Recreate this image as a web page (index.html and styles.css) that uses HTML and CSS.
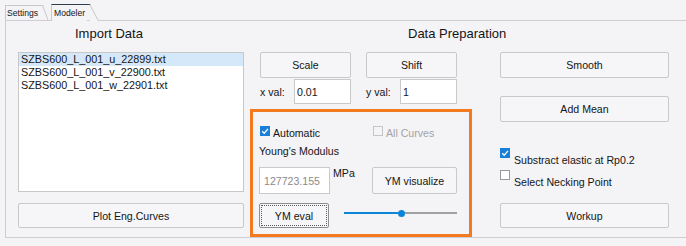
FILE: index.html
```html
<!DOCTYPE html>
<html>
<head>
<meta charset="utf-8">
<link rel="stylesheet" href="styles.css">
</head>
<body>
<div class="tabs">
  <div class="tab tab-settings">Settings</div>
  <div class="tab tab-modeler">Modeler</div>
</div>
<div class="panel">
  <div class="heads">
    <div class="h-import">Import Data</div>
    <div class="h-prep">Data Preparation</div>
  </div>
  <div class="cols">
    <div class="col-left">
      <div class="list">
        <div class="item sel">SZBS600_L_001_u_22899.txt</div>
        <div class="item">SZBS600_L_001_v_22900.txt</div>
        <div class="item">SZBS600_L_001_w_22901.txt</div>
      </div>
      <button class="btn btn-plot">Plot Eng.Curves</button>
    </div>
    <div class="col-mid">
      <div class="prep-top">
        <div class="btn-row">
          <button class="btn btn-sm">Scale</button>
          <button class="btn btn-sm">Shift</button>
        </div>
        <div class="in-row">
          <span class="lbl">x val:</span>
          <span class="field field-sm">0.01</span>
          <span class="lbl lbl-y">y val:</span>
          <span class="field field-sm">1</span>
        </div>
      </div>
      <div class="ym">
        <div class="ym-row1">
          <div class="chk-group">
            <span class="box checked"><svg viewBox="0 0 10 10" width="10" height="10"><polyline points="2.2,5.2 4.2,7.2 8,2.8" fill="none" stroke="#fff" stroke-width="1.3"/></svg></span>
            <span class="chk-text">Automatic</span>
          </div>
          <div class="chk-group">
            <span class="box disabled"></span>
            <span class="chk-text dim">All Curves</span>
          </div>
        </div>
        <div class="ym-label">Young's Modulus</div>
        <div class="ym-row3">
          <div class="ym-val">
            <span class="field field-ym">127723.155</span>
            <span class="unit">MPa</span>
          </div>
          <button class="btn btn-vis">YM visualize</button>
        </div>
        <div class="ym-row4">
          <button class="btn btn-eval">YM eval</button>
          <div class="slider">
            <span class="track-l"></span>
            <span class="thumb"></span>
            <span class="track-r"></span>
          </div>
        </div>
      </div>
    </div>
    <div class="col-right">
      <button class="btn btn-r">Smooth</button>
      <button class="btn btn-r btn-mean">Add Mean</button>
      <div class="opt opt-a">
        <span class="box checked"><svg viewBox="0 0 10 10" width="10" height="10"><polyline points="2.2,5.2 4.2,7.2 8,2.8" fill="none" stroke="#fff" stroke-width="1.3"/></svg></span>
        <span class="opt-text">Substract elastic at Rp0.2</span>
      </div>
      <div class="opt opt-b">
        <span class="box"></span>
        <span class="opt-text">Select Necking Point</span>
      </div>
      <button class="btn btn-r btn-work">Workup</button>
    </div>
  </div>
</div>
</body>
</html>
```
FILE: styles.css
```css
* { box-sizing: border-box; }
html, body { margin: 0; padding: 0; }
body {
  width: 686px;
  height: 246px;
  overflow: hidden;
  background: #f4f3f6;
  font-family: "Liberation Sans", Arial, sans-serif;
  font-size: 10.6px;
  color: #151515;
}

/* tabs */
.tabs {
  position: relative;
  z-index: 1;
  display: flex;
  align-items: flex-end;
  height: 20px;
  padding-left: 5px;
}
.tab {
  position: relative;
  font-size: 8.6px;
  line-height: 12px;
  background: #f4f3f6;
  border-left: 1px solid #c9c7cb;
  border-top: 1px solid #c9c7cb;
  white-space: nowrap;
}
.tab::after {
  content: "";
  position: absolute;
  top: -1px;
  bottom: 0;
  right: -3px;
  width: 8px;
  background: #f4f3f6;
  border-top: 1px solid #c9c7cb;
  border-right: 1px solid #c9c7cb;
  transform-origin: top left;
  z-index: -1;
}
.tab-settings {
  width: 35px;
  height: 15px;
  padding: 1px 0 0 1px;
}
.tab-settings::after { transform: skewX(20deg); }
.tab-modeler {
  width: 36px;
  height: 17px;
  margin-left: 11px;
  margin-bottom: -1px;
  padding: 2px 0 0 2px;
  border-top-color: #2e3f52;
}
.tab-modeler::after {
  transform: skewX(28deg);
  border-top-color: #2e3f52;
}

/* panel */
.panel {
  margin-left: 5px;
  height: 218px;
  border: 1px solid #cfcdd1;
  border-right: none;
  padding-left: 12px;
}
.heads {
  display: grid;
  grid-template-columns: 226px 1fr;
  column-gap: 6px;
  height: 31px;
  font-size: 13px;
  line-height: 16px;
}
.h-import { padding: 5px 0 0 57px; }
.h-prep { padding: 5px 0 0 158px; white-space: nowrap; }

.cols { display: flex; }

/* buttons */
.btn {
  display: flex;
  align-items: center;
  justify-content: center;
  margin: 0;
  padding: 0;
  font: inherit;
  color: #151515;
  background: #f6f5f7;
  border: 1px solid #cac8cc;
  border-radius: 2px;
}

/* left column */
.col-left { width: 226px; }
.list {
  height: 140px;
  background: #fff;
  border: 1px solid #c8c8c8;
  font-size: 10.8px;
  line-height: 13px;
}
.item { padding-left: 2px; white-space: nowrap; }
.item.sel { background: #d5e8fa; }
.btn-plot { width: 100%; height: 25px; margin-top: 11px; }

/* middle column */
.col-mid { width: 222px; margin-left: 6px; }
.prep-top { padding-left: 10px; }
.btn-row { display: flex; gap: 15px; }
.btn-sm { width: 91px; height: 26px; }
.in-row {
  display: flex;
  align-items: center;
  height: 25px;
  margin-top: 1px;
}
.lbl { width: 34px; }
.lbl-y { margin-left: 15px; }
.field {
  display: flex;
  align-items: center;
  background: #fff;
  border: 1px solid #c9c9c9;
}
.field-sm { width: 57px; height: 25px; padding-left: 2px; }

.ym {
  margin-top: 5px;
  height: 128px;
  border: 3px solid #f47a1f;
  padding: 15px 0 0 6px;
}
.ym-row1 {
  display: grid;
  grid-template-columns: 114px auto;
  height: 12px;
  line-height: 12px;
}
.chk-group { display: flex; align-items: flex-start; }
.chk-group:first-child { padding-left: 1px; }
.chk-text { margin-left: 3px; }
.dim { color: #a3a3a3; }

.box {
  flex: 0 0 10px;
  width: 10px;
  height: 10px;
  margin-top: -1px;
  background: #fff;
  border: 1px solid #9a9a9a;
}
.box svg { display: block; }
.box.checked { background: #1a7fd6; border-color: #1a7fd6; }
.box.checked svg { margin: -1px; }
.box.disabled { border-color: #c6c6c6; background: transparent; }

.ym-label { margin-top: 6px; line-height: 12px; }
.ym-row3 {
  display: grid;
  grid-template-columns: 113px 85px;
  margin-top: 10px;
}
.ym-val { display: flex; align-items: flex-start; }
.field-ym {
  width: 71px;
  height: 27px;
  padding-left: 4px;
  color: #8a8a8a;
}
.unit { margin-left: 3px; line-height: 12px; }
.btn-vis { height: 27px; }

.ym-row4 {
  display: grid;
  grid-template-columns: 85px 113px;
  margin-top: 9px;
}
.btn-eval {
  position: relative;
  width: 70px;
  height: 25px;
  border-color: #8e8e8e;
}
.btn-eval::after {
  content: "";
  position: absolute;
  inset: 1px;
  border: 1px dotted #5a5a5a;
}
.slider {
  display: flex;
  align-items: center;
  height: 8px;
  margin-top: 6px;
}
.track-l { flex: 0 0 54px; height: 2px; background: #0c86d6; }
.thumb {
  flex: 0 0 7px;
  width: 7px;
  height: 7px;
  border-radius: 50%;
  background: #0a84d8;
}
.track-r { flex: 1; height: 2px; background: #a0a0a0; }

/* right column */
.col-right { width: 169px; margin-left: 28px; }
.btn-r { width: 169px; height: 26px; }
.btn-mean { margin-top: 18px; }
.opt { display: flex; align-items: flex-start; height: 18px; }
.opt .box { margin-top: 0; }
.opt-a { margin-top: 26px; }
.opt-b { margin-top: 4px; }
.opt-text { margin: 6px 0 0 4px; line-height: 12px; white-space: nowrap; }
.btn-work { height: 25px; margin-top: 15px; }
```
